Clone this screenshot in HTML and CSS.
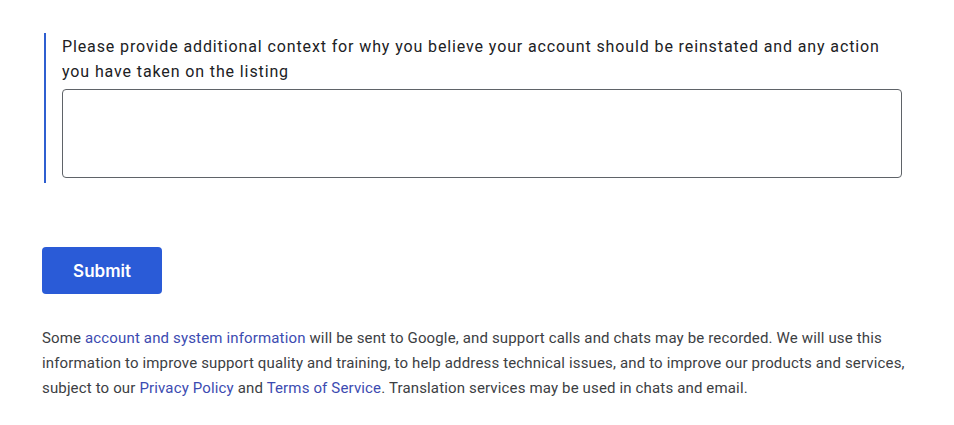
FILE: index.html
```html
<!DOCTYPE html>
<html lang="en">
<head>
<meta charset="utf-8">
<link rel="stylesheet" href="styles.css">
</head>
<body>
<main class="page">
  <section class="question">
    <label class="question-label" for="ctx">Please provide additional context for why you believe your account should be reinstated and any action you have taken on the listing</label>
    <textarea id="ctx" class="question-input"></textarea>
  </section>
  <button class="submit" type="button">Submit</button>
  <p class="disclaimer">Some <a href="#">account and system information</a> will be sent to Google, and support calls and chats may be recorded. We will use this information to improve support quality and training, to help address technical issues, and to improve our products and services, subject to our <a href="#">Privacy Policy</a> and <a href="#">Terms of Service</a>. Translation services may be used in chats and email.</p>
</main>
</body>
</html>
```
FILE: styles.css
```css
html, body {
  margin: 0;
  padding: 0;
  background: #ffffff;
}
.page {
  padding: 33px 42px 0 42px;
  font-family: Roboto, "Liberation Sans", sans-serif;
  color: #202124;
}
.question {
  margin-left: 2px;
  border-left: 2px solid #2f5fd0;
  padding: 1px 0 5px 16px;
  display: flex;
  flex-direction: column;
}
.question-label {
  font-size: 16px;
  line-height: 25px;
  letter-spacing: 0.88px;
  color: #202124;
  max-width: 840px;
  margin-bottom: 5px;
}
.question-input {
  box-sizing: border-box;
  width: 840px;
  height: 89px;
  border: 1px solid #5f6368;
  border-radius: 4px;
  resize: none;
  font: inherit;
  outline: none;
}
.submit {
  display: block;
  margin-top: 64px;
  width: 120px;
  height: 47px;
  border: none;
  border-radius: 4px;
  background: #2a5bd7;
  color: #ffffff;
  font-family: Inter, Roboto, sans-serif;
  font-weight: 600;
  font-size: 17px;
  cursor: pointer;
}
.disclaimer {
  margin: 32px 0 0 0;
  font-size: 15px;
  line-height: 25px;
  letter-spacing: 0.15px;
  color: #3c4043;
  max-width: 870px;
}
.disclaimer a {
  color: #3c4bb1;
  text-decoration: none;
}
```
